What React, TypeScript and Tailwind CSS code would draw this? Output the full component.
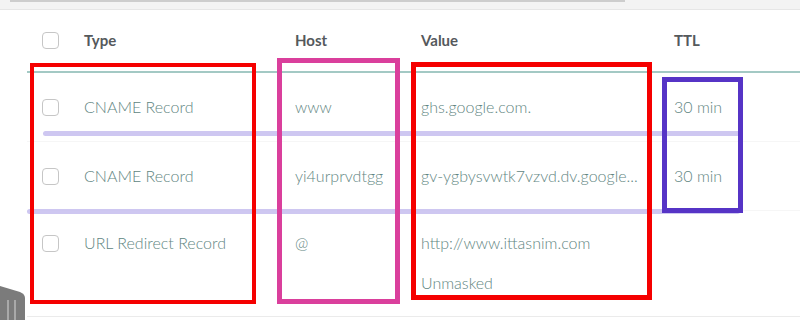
import React from 'react';

interface DnsRecord {
  type: string;
  host: string;
  value: string;
  extra?: string;
  ttl?: string;
}

const records: DnsRecord[] = [
  { type: 'CNAME Record', host: 'www', value: 'ghs.google.com.', ttl: '30 min' },
  { type: 'CNAME Record', host: 'yi4urprvdtgg', value: 'gv-ygbysvwtk7vzvd.dv.google...', ttl: '30 min' },
  { type: 'URL Redirect Record', host: '@', value: 'http://www.ittasnim.com', extra: 'Unmasked' },
];

const Checkbox = () => (
  <div className="w-[17px] h-[17px] rounded-[4px] border border-[#c6c6c6] bg-white shrink-0" />
);

/** 주석 상자 (스크린샷 위에 그려진 표시) */
const Box = ({ className }: { className: string }) => (
  <div className={`absolute pointer-events-none ${className}`} />
);

export default function App() {
  return (
    <div
      className="relative w-[800px] h-[320px] bg-white overflow-hidden"
      style={{ fontFamily: 'Lato, "Open Sans", sans-serif' }}
    >
      {/* top bar */}
      <div className="h-[10px] bg-[#f3f3f3] border-b border-[#e6e6e6]">
        <div className="ml-[10px] w-[615px] h-[2px] bg-[#cdcdcd]" />
      </div>

      <div className="ml-[27px]">
        {/* header */}
        <div className="flex items-center h-[63px] border-b-2 border-[#a3c9c4] text-[15px] font-bold text-[#55595c]">
          <div className="w-[57px] pl-[15px]">
            <Checkbox />
          </div>
          <div className="w-[211px]">Type</div>
          <div className="w-[126px]">Host</div>
          <div className="w-[253px]">Value</div>
          <div>TTL</div>
        </div>

        {/* rows */}
        {records.map((r, i) => (
          <div
            key={i}
            className={`flex text-[16px] font-light text-[#5f8682] border-b ${
              r.extra
                ? 'items-start pt-[12px] pb-[13px] leading-[40px] border-[#ebebeb]'
                : 'items-center h-[69px] border-[#f6f6f6]'
            }`}
          >
            <div className={`w-[57px] pl-[15px] ${r.extra ? 'pt-[12px]' : ''}`}>
              <Checkbox />
            </div>
            <div className="w-[211px]">{r.type}</div>
            <div className="w-[126px]">{r.host}</div>
            <div className="w-[253px] pr-[20px] whitespace-nowrap">
              <div>{r.value}</div>
              {r.extra && <div>{r.extra}</div>}
            </div>
            <div>{r.ttl}</div>
          </div>
        ))}
      </div>

      {/* bottom-left partial icon */}
      <svg className="absolute left-0 top-[286px]" width="26" height="34" viewBox="0 0 26 34">
        <path d="M0 0 L20 6 Q25 8 25 12 L25 34 L0 34 Z" fill="#7b7b7b" />
        <rect x="7" y="14" width="2" height="20" fill="#a9a9a9" />
        <rect x="14" y="14" width="2" height="20" fill="#a9a9a9" />
      </svg>

      {/* annotation lines */}
      <div className="absolute left-[43px] top-[131px] w-[697px] h-[5px] rounded-full bg-[#c9c1ef]/90" />
      <div className="absolute left-[27px] top-[209px] w-[713px] h-[5px] rounded-full bg-[#c9c1ef]/90" />

      {/* annotation boxes */}
      <Box className="left-[30px] top-[63px] w-[226px] h-[241px] border-[4px] border-[#f50000]" />
      <Box className="left-[277px] top-[58px] w-[123px] h-[246px] border-[5px] border-[#da3f9c]" />
      <Box className="left-[411px] top-[62px] w-[241px] h-[238px] border-[5px] border-[#f50000]" />
      <Box className="left-[662px] top-[77px] w-[81px] h-[136px] border-[5px] border-[#5634c6]" />
    </div>
  );
}
